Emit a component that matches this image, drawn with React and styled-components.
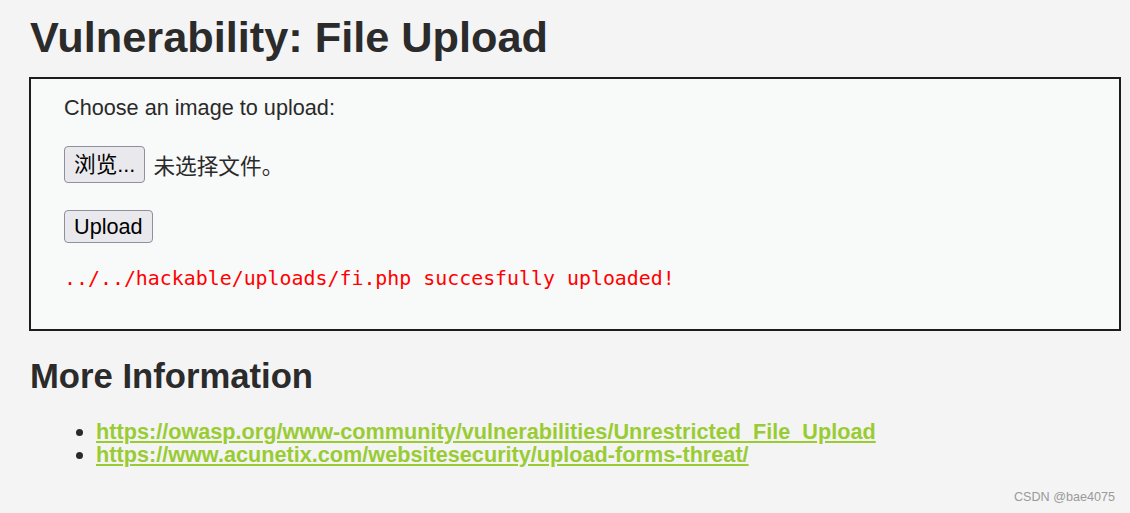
import React from "react";
import styled, { createGlobalStyle } from "styled-components";

const GlobalStyle = createGlobalStyle`
    html, body {
        margin: 0;
        padding: 0;
        background: #f4f4f4;
    }
    body {
        font-family: "Liberation Sans", Arial, "Noto Sans CJK SC", sans-serif;
        color: #2f2f2f;
        min-height: 513px;
        position: relative;
    }
`;

const Page = styled.div`
    padding: 16px 9px 0 30px;
`;

const Title = styled.h1`
    margin: 0 0 18px 0;
    font-size: 43.3px;
    line-height: 1;
    font-weight: 700;
    color: #2b2b2b;
`;

const CodeArea = styled.div`
    margin-left: -1px;
    border: 2px solid #1c1c1c;
    background: #f8f9f9;
    padding: 18px 20px 40px 33px;
`;

const Label = styled.p`
    margin: 0;
    font-size: 21.67px;
    line-height: 1;
    color: #2a2a2a;
`;

const FileRow = styled.div`
    display: flex;
    align-items: center;
    gap: 8px;
    margin-top: ${(p) => p.top}px;
`;

const Button = styled.button`
    box-sizing: border-box;
    height: ${(p) => p.h}px;
    padding: 0 9px;
    border: 1px solid #8f8f9d;
    border-radius: 4px;
    background: #e9e9ed;
    color: #000;
    font-family: "Liberation Sans", Arial, "Noto Sans CJK SC", sans-serif;
    font-size: 21.67px;
    line-height: 1;
`;

const FileName = styled.span`
    font-size: 21.67px;
    color: #2a2a2a;
    font-family: "Liberation Sans", Arial, "Noto Sans CJK SC", sans-serif;
`;

const Result = styled.pre`
    margin: 26px 0 0 0;
    font-family: "DejaVu Sans Mono", "Liberation Mono", monospace;
    font-size: 19.9px;
    line-height: 1;
    color: #ff0000;
`;

const SubTitle = styled.h2`
    margin: 28px 0 26px 0;
    font-size: 34.67px;
    line-height: 1;
    font-weight: 700;
    color: #2b2b2b;
`;

const Links = styled.ul`
    margin: 0;
    padding-left: 66px;
    list-style: disc;
    font-size: 21.67px;
    line-height: 23px;
    color: #2a2a2a;
`;

const Link = styled.a`
    color: #99cc33;
    font-weight: 700;
    text-decoration: underline;
`;

const Watermark = styled.div`
    position: absolute;
    right: 15px;
    top: 490px;
    font-size: 12.6px;
    color: #9a9a9a;
    font-family: "Liberation Sans", Arial, sans-serif;
`;

const App = () => {
    return (
        <>
            <GlobalStyle />
            <Page>
                <Title>Vulnerability: File Upload</Title>

                <CodeArea>
                    <Label>Choose an image to upload:</Label>
                    <FileRow top={27}>
                        <Button h={37}>浏览...</Button>
                        <FileName>未选择文件。</FileName>
                    </FileRow>
                    <FileRow top={27}>
                        <Button h={33}>Upload</Button>
                    </FileRow>
                    <Result>../../hackable/uploads/fi.php succesfully uploaded!</Result>
                </CodeArea>

                <SubTitle>More Information</SubTitle>
                <Links>
                    <li>
                        <Link href="#">
                            https://owasp.org/www-community/vulnerabilities/Unrestricted_File_Upload
                        </Link>
                    </li>
                    <li>
                        <Link href="#">
                            https://www.acunetix.com/websitesecurity/upload-forms-threat/
                        </Link>
                    </li>
                </Links>
            </Page>
            <Watermark>CSDN @bae4075</Watermark>
        </>
    );
};

export default App;
